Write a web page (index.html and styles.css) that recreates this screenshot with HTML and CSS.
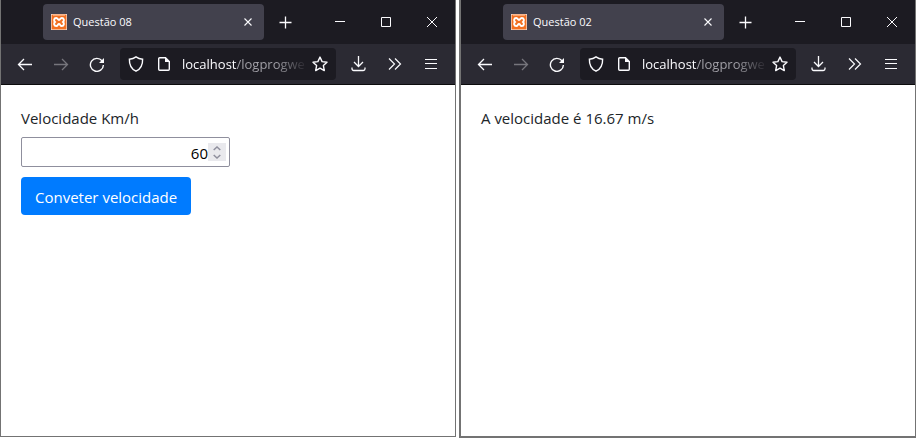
FILE: index.html
```html
<!DOCTYPE html>
<html lang="pt-BR">
<head>
<meta charset="utf-8">
<title>Questão 08</title>
<link rel="stylesheet" href="styles.css">
</head>
<body>
<svg class="sprite" aria-hidden="true">
  <symbol id="i-xampp" viewBox="0 0 16 16">
    <rect width="16" height="16" rx="1" fill="#f37021"/>
    <path d="M2 1.500h12" stroke="#f9a56f" stroke-width="1"/>
    <path d="M5.200 4C3 4 2.400 6.600 4 8C2.400 9.400 3 12 5.200 12C7 12 6.600 10 8 10S9 12 10.800 12C13 12 13.600 9.400 12 8C13.600 6.600 13 4 10.800 4C9 4 9.400 6 8 6S7 4 5.200 4Z" fill="none" stroke="#fff" stroke-width="1.900"/>
  </symbol>
  <symbol id="i-x" viewBox="0 0 16 16"><path d="M4.500 4.500l7 7M11.500 4.500l-7 7" stroke-width="1.100"/></symbol>
  <symbol id="i-plus" viewBox="0 0 16 16"><path d="M7.500 2.500v12M1.500 8.500h12" stroke-width="1.300"/></symbol>
  <symbol id="i-min" viewBox="0 0 16 16"><path d="M3 7.500h10"/></symbol>
  <symbol id="i-max" viewBox="0 0 16 16"><path d="M3.500 3.500h9v9h-9z"/></symbol>
  <symbol id="i-close" viewBox="0 0 16 16"><path d="M3 3l10 10M13 3L3 13"/></symbol>
  <symbol id="i-back" viewBox="0 0 16 16"><path d="M15 8.500H1.500M7 3L1.500 8.500L7 14" stroke-width="1.300"/></symbol>
  <symbol id="i-forward" viewBox="0 0 16 16"><path d="M1 8.500h13.500M9 3l5.500 5.500L9 14" stroke-width="1.300"/></symbol>
  <symbol id="i-reload" viewBox="0 0 16 16"><path d="M13 4.800A6.500 6.500 0 1 0 14.400 9" stroke-width="1.400"/><path d="M15 2v5h-5z" fill="currentColor" stroke="none"/></symbol>
  <symbol id="i-shield" viewBox="0 0 16 16"><path d="M8 .9C6.200 2.200 4 3 1.400 3.200C1.200 8.200 2.800 12.700 8 15.200C13.200 12.700 14.800 8.200 14.600 3.200C12 3 9.800 2.200 8 .9Z" stroke-width="1.400"/></symbol>
  <symbol id="i-page" viewBox="0 0 16 16"><path d="M9.500 1.700H3.700a1 1 0 0 0-1 1v10.600a1 1 0 0 0 1 1h8.600a1 1 0 0 0 1-1V5.500Z" stroke-width="1.400"/><path d="M9 1.500V6h5z" fill="currentColor" stroke="none"/></symbol>
  <symbol id="i-star" viewBox="0 0 16 16"><path d="M8 1.100l2.100 4.500 4.900.6-3.600 3.400.9 5L8 12.200l-4.300 2.400.9-5L1 6.200l4.900-.6Z" stroke-width="1.400" stroke-linejoin="round"/></symbol>
  <symbol id="i-download" viewBox="0 0 16 16"><path d="M7.500 0v10M3 6l4.500 4.500L12 6M1 11.500v1.300a1.700 1.700 0 0 0 1.700 1.700h9.600a1.700 1.700 0 0 0 1.700-1.700v-1.300" stroke-width="1.300"/></symbol>
  <symbol id="i-more" viewBox="0 0 16 16"><path d="M2 2.500L7.500 8L2 13.500M8 2.500L13.500 8L8 13.500" stroke-width="1.200"/></symbol>
  <symbol id="i-menu" viewBox="0 0 16 16"><path d="M2 3.500h12M2 7.500h12M2 12.500h12"/></symbol>
  <symbol id="i-up" viewBox="0 0 8 5"><path d="M.7 4L4 1l3.300 3" stroke-width="1.500"/></symbol>
  <symbol id="i-down" viewBox="0 0 8 5"><path d="M.7 1L4 4l3.300-3" stroke-width="1.500"/></symbol>
</svg>

<section class="window">
  <header class="titlebar">
    <div class="tab">
      <svg class="icon"><use href="#i-xampp"/></svg>
      <span class="tab-title">Questão 08</span>
      <button class="tab-close" aria-label="Fechar aba"><svg class="icon"><use href="#i-x"/></svg></button>
    </div>
    <button class="tool new-tab" aria-label="Nova aba"><svg class="icon"><use href="#i-plus"/></svg></button>
    <div class="controls">
      <button class="control" aria-label="Minimizar"><svg class="icon"><use href="#i-min"/></svg></button>
      <button class="control" aria-label="Maximizar"><svg class="icon"><use href="#i-max"/></svg></button>
      <button class="control" aria-label="Fechar"><svg class="icon"><use href="#i-close"/></svg></button>
    </div>
  </header>
  <nav class="toolbar">
    <div class="tools">
      <button class="tool" aria-label="Voltar"><svg class="icon"><use href="#i-back"/></svg></button>
      <button class="tool" aria-label="Avançar" disabled><svg class="icon"><use href="#i-forward"/></svg></button>
      <button class="tool" aria-label="Recarregar"><svg class="icon"><use href="#i-reload"/></svg></button>
    </div>
    <div class="urlbar">
      <svg class="icon"><use href="#i-shield"/></svg>
      <svg class="icon"><use href="#i-page"/></svg>
      <span class="url">localhost<span class="path">/logprogwe</span></span>
      <button class="bookmark" aria-label="Favoritar"><svg class="icon"><use href="#i-star"/></svg></button>
    </div>
    <div class="tools">
      <button class="tool" aria-label="Downloads"><svg class="icon"><use href="#i-download"/></svg></button>
      <button class="tool" aria-label="Mais ferramentas"><svg class="icon"><use href="#i-more"/></svg></button>
      <button class="tool" aria-label="Menu"><svg class="icon"><use href="#i-menu"/></svg></button>
    </div>
  </nav>
  <main class="page">
    <form class="form">
      <label for="speed">Velocidade Km/h</label>
      <div class="number">
        <input id="speed" type="number" value="60">
        <span class="spinner" aria-hidden="true">
          <svg class="arrow"><use href="#i-up"/></svg>
          <svg class="arrow"><use href="#i-down"/></svg>
        </span>
      </div>
      <button class="submit" type="button">Conveter velocidade</button>
    </form>
  </main>
</section>

<section class="window window-result">
  <header class="titlebar">
    <div class="tab">
      <svg class="icon"><use href="#i-xampp"/></svg>
      <span class="tab-title">Questão 02</span>
      <button class="tab-close" aria-label="Fechar aba"><svg class="icon"><use href="#i-x"/></svg></button>
    </div>
    <button class="tool new-tab" aria-label="Nova aba"><svg class="icon"><use href="#i-plus"/></svg></button>
    <div class="controls">
      <button class="control" aria-label="Minimizar"><svg class="icon"><use href="#i-min"/></svg></button>
      <button class="control" aria-label="Maximizar"><svg class="icon"><use href="#i-max"/></svg></button>
      <button class="control" aria-label="Fechar"><svg class="icon"><use href="#i-close"/></svg></button>
    </div>
  </header>
  <nav class="toolbar">
    <div class="tools">
      <button class="tool" aria-label="Voltar"><svg class="icon"><use href="#i-back"/></svg></button>
      <button class="tool" aria-label="Avançar" disabled><svg class="icon"><use href="#i-forward"/></svg></button>
      <button class="tool" aria-label="Recarregar"><svg class="icon"><use href="#i-reload"/></svg></button>
    </div>
    <div class="urlbar">
      <svg class="icon"><use href="#i-shield"/></svg>
      <svg class="icon"><use href="#i-page"/></svg>
      <span class="url">localhost<span class="path">/logprogwe</span></span>
      <button class="bookmark" aria-label="Favoritar"><svg class="icon"><use href="#i-star"/></svg></button>
    </div>
    <div class="tools">
      <button class="tool" aria-label="Downloads"><svg class="icon"><use href="#i-download"/></svg></button>
      <button class="tool" aria-label="Mais ferramentas"><svg class="icon"><use href="#i-more"/></svg></button>
      <button class="tool" aria-label="Menu"><svg class="icon"><use href="#i-menu"/></svg></button>
    </div>
  </nav>
  <main class="page">
    <p class="result">A velocidade é 16.67 m/s</p>
  </main>
</section>
</body>
</html>
```
FILE: styles.css
```css
* { box-sizing: border-box; }

body {
  display: grid;
  grid-template-columns: 456fr 457fr;
  gap: 3px;
  min-height: 100vh;
  margin: 0;
  padding: 0 6px 6px 0;
  background: #fff;
  color: #212529;
  font-family: "Open Sans", "Noto Sans", sans-serif;
  font-size: 15px;
  line-height: 24px;
}

button {
  padding: 0;
  border: 0;
  background: none;
  color: inherit;
  font: inherit;
}

.sprite { position: absolute; width: 0; height: 0; }

.icon {
  display: block;
  flex: none;
  width: 16px;
  height: 16px;
  fill: none;
  stroke: currentColor;
}

.window {
  display: flex;
  flex-direction: column;
  min-width: 0;
  margin-bottom: 1px;
  border: 1px solid #737373;
  border-top: 0;
}

.window-result {
  margin-bottom: 0;
  border-left-width: 2px;
  border-bottom-width: 2px;
}

.titlebar {
  display: flex;
  align-items: center;
  height: 44px;
  padding-left: 42px;
  background: #1c1b22;
  color: #fbfbfe;
}

.tab {
  display: flex;
  flex: 1;
  align-items: center;
  gap: 6px;
  min-width: 0;
  height: 36px;
  padding: 0 8px;
  border-radius: 4px;
  background: #42414d;
  font-size: 11px;
}

.tab-title { flex: 1; }

.tool {
  display: grid;
  place-items: center;
  width: 32px;
  height: 32px;
}

.tool:disabled { color: #76757c; }

.new-tab { margin: 0 13px 0 4px; width: 36px; }

.controls { display: flex; }

.control {
  display: grid;
  place-items: center;
  width: 46px;
  height: 44px;
}

.toolbar {
  display: flex;
  align-items: center;
  gap: 7px;
  height: 41px;
  padding: 0 8px;
  border-bottom: 1px solid #0c0c0d;
  background: #2b2a33;
  color: #fbfbfe;
}

.tools { display: flex; gap: 4px; }

.urlbar {
  display: flex;
  flex: 1;
  align-items: center;
  gap: 12px;
  min-width: 0;
  height: 32px;
  padding: 0 8px;
  border-radius: 4px;
  background: #1c1b22;
  font-size: 13px;
}

.url {
  flex: 1;
  min-width: 0;
  margin: 0 -8px 0 -2px;
  white-space: nowrap;
  mask-image: linear-gradient(to left, transparent, #000 32px);
}

.path { color: #a09fa6; }

.page { flex: 1; padding: 21px 20px; }

.form {
  display: flex;
  flex-direction: column;
  align-items: flex-start;
}

.number { position: relative; margin: 7px 0 10px; }

.number input {
  display: block;
  width: 209px;
  height: 30px;
  padding: 2px 21px 0 2px;
  border: 1px solid #8f8f9d;
  border-radius: 2px;
  background: #fff;
  color: #000;
  font: inherit;
  text-align: right;
  appearance: textfield;
}

.number input::-webkit-inner-spin-button { appearance: none; margin: 0; }

.spinner {
  position: absolute;
  top: 6px;
  right: 4px;
  display: flex;
  flex-direction: column;
  align-items: center;
  justify-content: center;
  gap: 3px;
  width: 18px;
  height: 18px;
  background: #e9e9ed;
  color: #8f8f9d;
}

.arrow {
  width: 8px;
  height: 5px;
  fill: none;
  stroke: currentColor;
}

.submit {
  height: 38px;
  padding: 2px 14px 0;
  border-radius: 4px;
  background: #007bff;
  color: #fff;
}

.result { margin: 0; }
```
